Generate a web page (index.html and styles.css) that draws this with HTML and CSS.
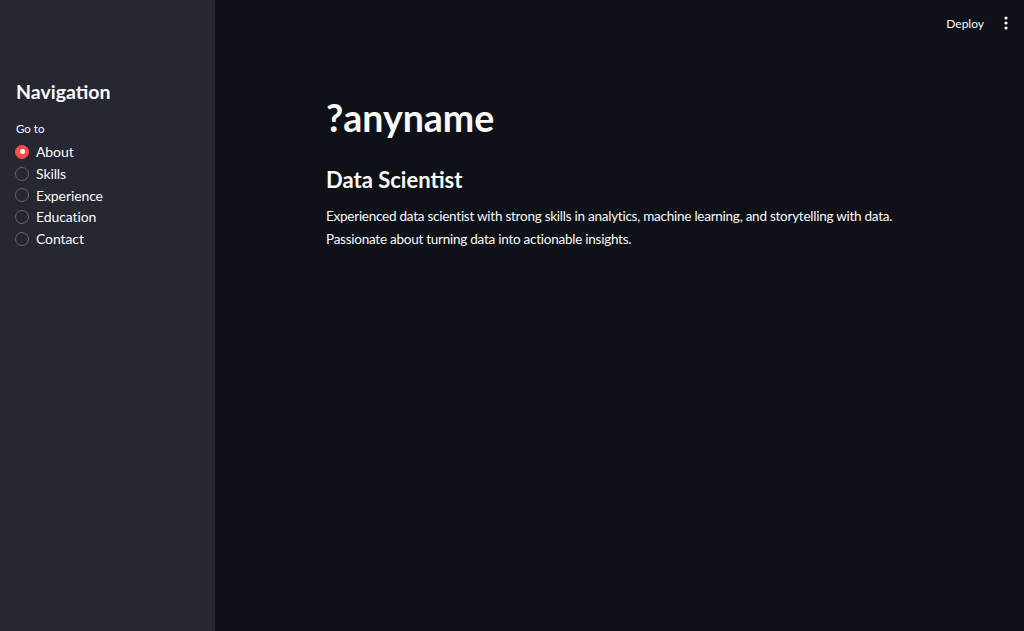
FILE: index.html
```html
<!DOCTYPE html>
<html>
<head>
    <title>Portfolio</title>
    <link rel="stylesheet" href="styles.css">
</head>
<body>
    <div class="app">
        <aside class="sidebar">
            <h2 class="side-title">Navigation</h2>
            <div class="radio-label">Go to</div>
            <div class="radio-group">
                <label class="radio checked"><span class="dot"></span>About</label>
                <label class="radio"><span class="dot"></span>Skills</label>
                <label class="radio"><span class="dot"></span>Experience</label>
                <label class="radio"><span class="dot"></span>Education</label>
                <label class="radio"><span class="dot"></span>Contact</label>
            </div>
        </aside>

        <main class="main">
            <header class="toolbar">
                <button class="deploy">Deploy</button>
                <button class="menu" aria-label="menu">
                    <svg width="4" height="14" viewBox="0 0 4 14">
                        <circle cx="2" cy="2" r="1.6" fill="#fafafa"/>
                        <circle cx="2" cy="7" r="1.6" fill="#fafafa"/>
                        <circle cx="2" cy="12" r="1.6" fill="#fafafa"/>
                    </svg>
                </button>
            </header>

            <section class="content">
                <h1>?anyname</h1>
                <h3>Data Scientist</h3>
                <p>Experienced data scientist with strong skills in analytics, machine learning, and storytelling with data. Passionate about turning data into actionable insights.</p>
            </section>
        </main>
    </div>
</body>
</html>
```

FILE: styles.css
```css
body {
    margin: 0;
    font-family: 'Lato', 'Noto Sans', sans-serif;
    background-color: #0e1117;
    color: #fafafa;
}

.app {
    display: flex;
    height: 631px;
}

.sidebar {
    width: 215px;
    flex-shrink: 0;
    background-color: #262730;
    padding: 80px 15px 0 15px;
    box-sizing: border-box;
}

.side-title {
    margin: 0;
    padding-left: 1px;
    font-size: 19.5px;
    font-weight: 700;
    line-height: 24px;
}

.radio-label {
    margin-top: 18px;
    padding-left: 1px;
    font-size: 11.5px;
    line-height: 14px;
}

.radio-group {
    margin-top: 5px;
    display: flex;
    flex-direction: column;
}

.radio {
    display: flex;
    align-items: center;
    height: 21.7px;
    font-size: 14px;
    letter-spacing: -0.1px;
}

.radio .dot {
    display: flex;
    align-items: center;
    justify-content: center;
    width: 12px;
    height: 12px;
    border: 1px solid #62646f;
    border-radius: 50%;
    margin-right: 7px;
    flex-shrink: 0;
}

.radio.checked .dot {
    border-color: #ff4b4b;
    background-color: #ff4b4b;
}

.radio.checked .dot::after {
    content: "";
    width: 5px;
    height: 5px;
    border-radius: 50%;
    background-color: #ffffff;
}

.main {
    flex: 1;
    display: flex;
    flex-direction: column;
}

.toolbar {
    display: flex;
    justify-content: flex-end;
    align-items: center;
    height: 46px;
    padding-right: 12px;
}

.deploy {
    background: none;
    border: none;
    color: #fafafa;
    font-family: inherit;
    font-size: 12px;
    padding: 4px 8px;
    margin-right: 8px;
    cursor: pointer;
}

.menu {
    background: none;
    border: none;
    padding: 4px;
    display: flex;
    cursor: pointer;
}

.content {
    width: 587px;
    margin: 0 auto;
    padding-top: 50px;
}

h1 {
    margin: 0;
    font-size: 37.5px;
    font-weight: 700;
    line-height: 44px;
}

h3 {
    margin: 25px 0 0 0;
    font-size: 22px;
    font-weight: 700;
    line-height: 30px;
}

p {
    margin: 10px 0 0 0;
    font-size: 13.5px;
    line-height: 23px;
    letter-spacing: -0.25px;
}
```
